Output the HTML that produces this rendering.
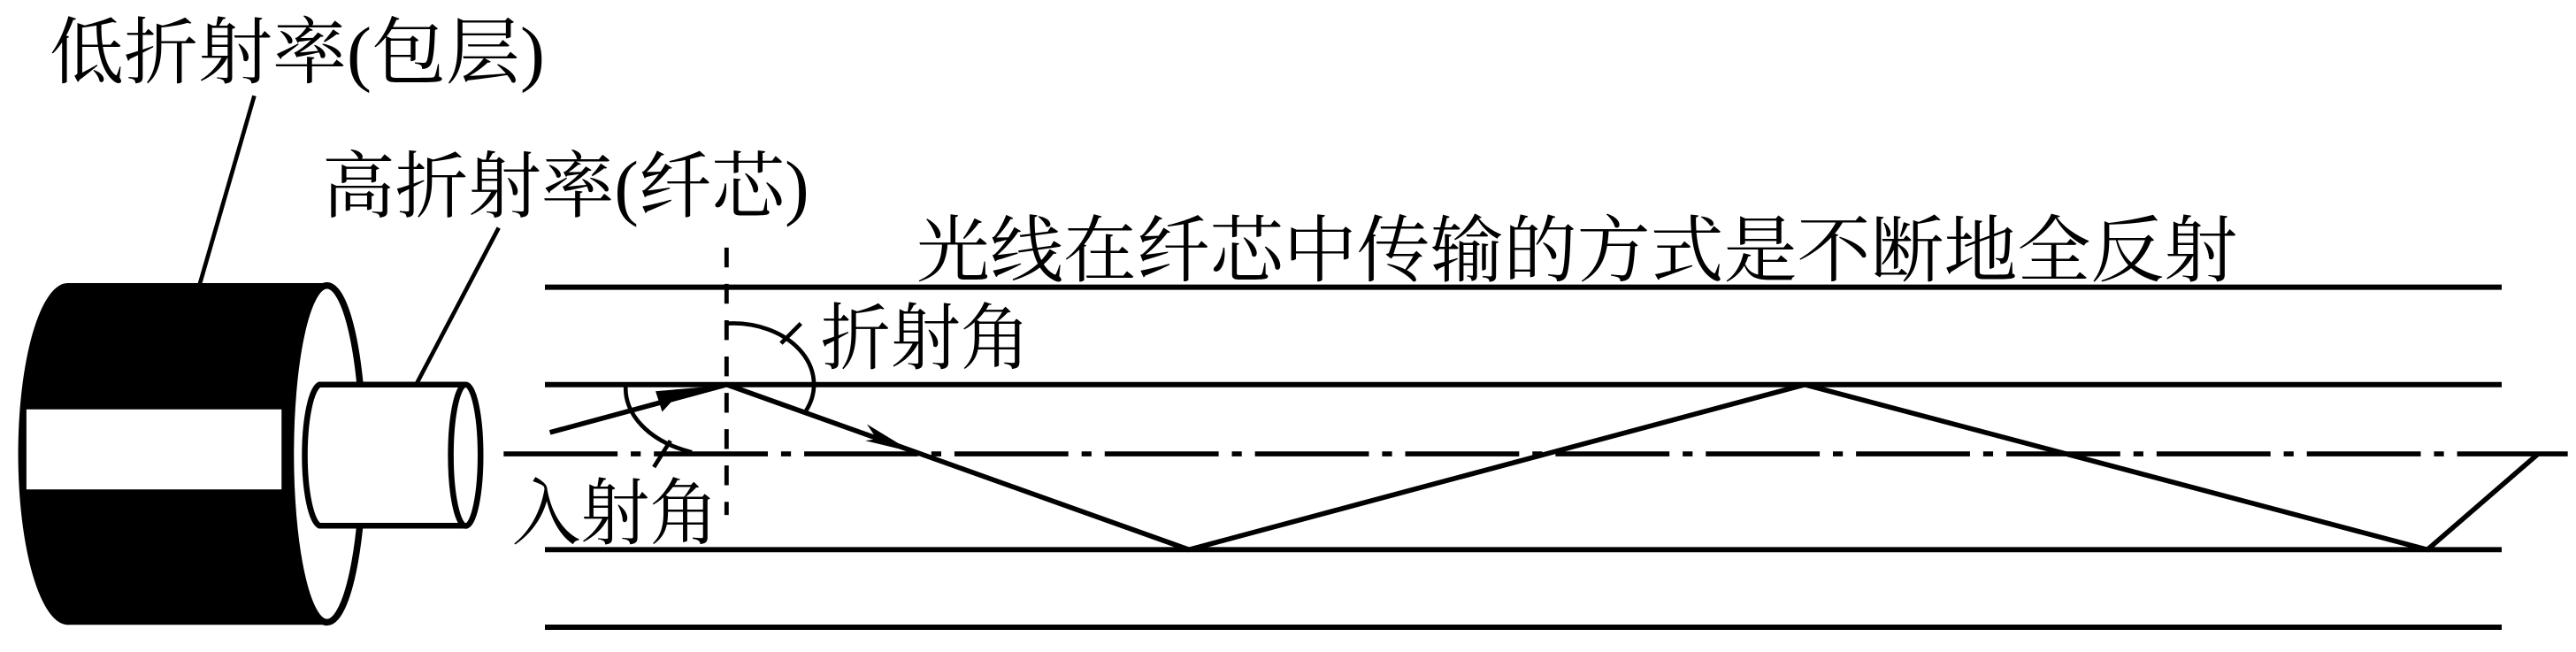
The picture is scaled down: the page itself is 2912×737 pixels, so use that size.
<!DOCTYPE html>
<html><head><meta charset="utf-8"><style>
html,body{margin:0;padding:0;background:#fff;}
svg{display:block;}
text{font-family:"Liberation Serif","Noto Serif CJK SC",serif;fill:#000;}
</style></head><body>
<svg width="2912" height="737" viewBox="0 0 1560 395" preserveAspectRatio="none" xmlns="http://www.w3.org/2000/svg">
<rect width="1560" height="395" fill="#fff"/>
<text x="30" y="47" font-size="44" textLength="300" lengthAdjust="spacingAndGlyphs">低折射率(包层)</text>
<text x="195" y="128" font-size="44" textLength="295" lengthAdjust="spacingAndGlyphs">高折射率(纤芯)</text>
<text x="555" y="167" font-size="44" textLength="800" lengthAdjust="spacingAndGlyphs">光线在纤芯中传输的方式是不断地全反射</text>
<text x="497" y="220" font-size="44" textLength="127" lengthAdjust="spacingAndGlyphs">折射角</text>
<text x="310" y="326" font-size="44" textLength="125" lengthAdjust="spacingAndGlyphs">入射角</text>
<line x1="154" y1="58" x2="121" y2="172" stroke="#000" stroke-width="2.5"/>
<line x1="302" y1="138" x2="252" y2="233" stroke="#000" stroke-width="2.5"/>
<rect x="41" y="171.5" width="157" height="207" fill="#000"/>
<ellipse cx="41" cy="275" rx="30" ry="103.5" fill="#000"/>
<rect x="16" y="248" width="154.5" height="48.5" fill="#fff"/>
<ellipse cx="198" cy="275" rx="22" ry="102" fill="#fff" stroke="#000" stroke-width="4"/>
<path d="M282,233 H193.5 A10,43 0 0 0 193.5,318.5 H282" fill="#fff" stroke="#000" stroke-width="3.5"/>
<ellipse cx="282" cy="275.8" rx="9" ry="42.8" fill="#fff" stroke="#000" stroke-width="3.5"/>
<g stroke="#000" stroke-width="3.2">
<line x1="330" y1="174" x2="1515" y2="174"/>
<line x1="330" y1="233" x2="1515" y2="233"/>
<line x1="330" y1="333" x2="1515" y2="333"/>
<line x1="330" y1="380" x2="1515" y2="380"/>
</g>
<line x1="305" y1="275" x2="1555" y2="275" stroke="#000" stroke-width="3" stroke-dasharray="69,8,6,8"/>
<line x1="440" y1="150" x2="440" y2="312" stroke="#000" stroke-width="2.6" stroke-dasharray="12,10"/>
<path d="M440,196 A49,37 0 0 1 488,249" fill="none" stroke="#000" stroke-width="2.5"/>
<line x1="473" y1="208" x2="485" y2="196" stroke="#000" stroke-width="2.5"/>
<path d="M379,233 A61,41 0 0 0 419,274" fill="none" stroke="#000" stroke-width="2.5"/>
<line x1="396" y1="283" x2="406" y2="267" stroke="#000" stroke-width="2.5"/>
<polyline points="333,262 440,233 720,333 1093,233 1470,333 1537,275" fill="none" stroke="#000" stroke-width="3"/>
<polygon points="438,233.5 397,237 401,249.5 407,243" fill="#000"/>
<polygon points="553,274 525,257 531,266 524,267" fill="#000"/>
</svg>
</body></html>
